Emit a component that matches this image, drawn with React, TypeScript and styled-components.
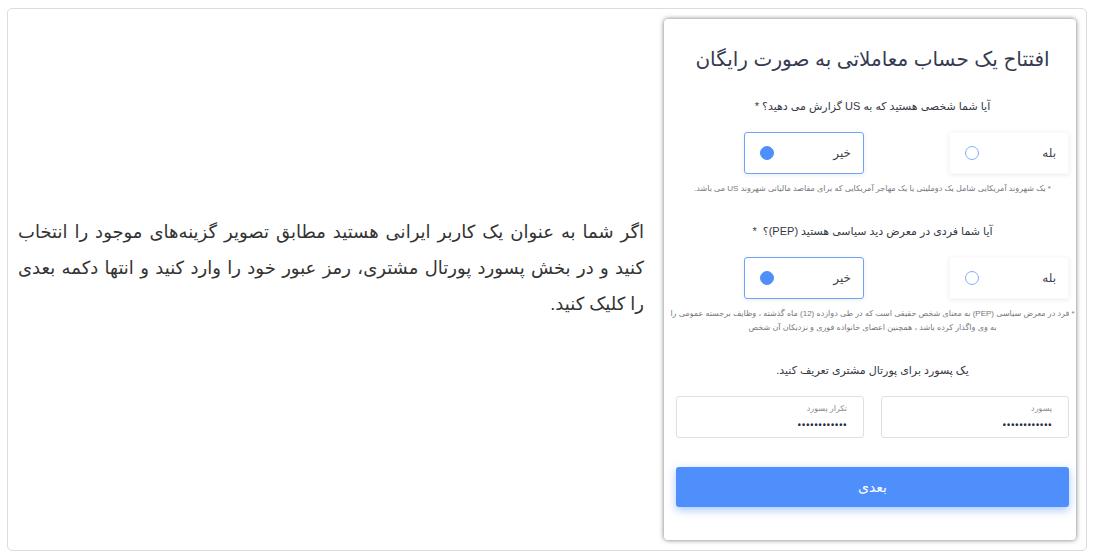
import React, { useState } from "react";
import styled, { createGlobalStyle } from "styled-components";

const GlobalStyle = createGlobalStyle`
  *, *::before, *::after { box-sizing: border-box; }
  body {
    margin: 0;
    background: #fff;
    font-family: "Liberation Sans", "DejaVu Sans", sans-serif;
  }
`;

const Panel = styled.main`
  display: flex;
  align-items: center;
  gap: 20px;
  margin: 8px 13px 5px 7px;
  padding: 10px;
  border: 1px solid #dcdcdc;
  border-radius: 5px;
`;

const FormCard = styled.form`
  flex: 0 0 412px;
  padding: 24px 7px 33px 12px;
  border-radius: 4px;
  background: #fff;
  box-shadow: 0 0 5px rgba(0, 0, 0, 0.55);
  color: #363b52;
`;

const Title = styled.h1`
  margin: 0 0 21px;
  font-size: 20px;
  line-height: 32px;
  font-weight: 400;
  text-align: center;
  white-space: nowrap;
`;

const Question = styled.h2`
  margin: 0 0 16px;
  font-size: 11px;
  line-height: 20px;
  font-weight: 400;
  text-align: center;
  color: #343844;
  white-space: nowrap;
`;

const Columns = styled.div`
  display: grid;
  grid-template-columns: 1fr 1fr;
  gap: 17px;
`;

const Option = styled.label<{ $selected: boolean }>`
  display: flex;
  align-items: center;
  justify-content: space-between;
  width: 120px;
  height: 42px;
  padding: 0 12px 0 15px;
  border: 1px solid ${(p) => (p.$selected ? "#6ea3f8" : "#fafafa")};
  border-radius: 3px;
  box-shadow: 0 1px 4px rgba(40, 60, 100, 0.1);
  font-size: 12px;
  line-height: 20px;
  color: #42454f;
`;

const Radio = styled.input`
  appearance: none;
  width: 14px;
  height: 14px;
  margin: 0;
  border: 1px solid #7fb0fa;
  border-radius: 50%;
  background: #fff;
  &:checked {
    border-color: #4f8ffb;
    background: #4f8ffb;
  }
`;

const Note = styled.p`
  margin: 8px -7px 25px;
  font-size: 8px;
  line-height: 14px;
  text-align: center;
  color: #75787d;
`;

const Field = styled.div`
  display: flex;
  flex-direction: column;
  height: 42px;
  padding: 5px 16px;
  border: 1px solid #e0e0e0;
  border-radius: 3px;
`;

const FieldLabel = styled.label`
  font-size: 8px;
  line-height: 14px;
  color: #85888e;
`;

const PasswordInput = styled.input`
  width: 100%;
  height: 18px;
  padding: 0;
  border: 0;
  outline: 0;
  background: transparent;
  font-family: "Noto Sans", sans-serif;
  font-size: 11px;
  color: #262b42;
`;

const NextButton = styled.button`
  display: block;
  width: 100%;
  height: 40px;
  margin-top: 29px;
  padding: 0;
  border: 0;
  border-radius: 3px;
  background: #4f8ffb;
  box-shadow: 0 3px 8px rgba(79, 143, 251, 0.5);
  font-family: inherit;
  font-size: 14px;
  color: #fff;
`;

const Description = styled.p`
  flex: 1;
  min-width: 0;
  margin: 0;
  padding-bottom: 24px;
  font-size: 18px;
  line-height: 36px;
  text-align: justify;
  color: #333;
`;

function YesNo({ name, label }: { name: string; label: string }) {
  const [value, setValue] = useState("no");
  return (
    <Columns role="radiogroup" aria-label={label}>
      {[["yes", "بله"], ["no", "خیر"]].map(([key, text]) => (
        <Option key={key} $selected={value === key}>
          {text}
          <Radio type="radio" name={name} value={key} checked={value === key} onChange={() => setValue(key)} />
        </Option>
      ))}
    </Columns>
  );
}

export default function App() {
  return (
    <>
      <GlobalStyle />
      <Panel dir="rtl" lang="fa">
        <FormCard onSubmit={(e) => e.preventDefault()}>
          <Title>افتتاح یک حساب معاملاتی به صورت رایگان</Title>
          <Question>آیا شما شخصی هستید که به US گزارش می دهید؟ *</Question>
          <YesNo name="us" label="US" />
          <Note>* یک شهروند آمریکایی شامل یک دوملیتی یا یک مهاجر آمریکایی که برای مقاصد مالیاتی شهروند US می باشد.</Note>
          <Question>آیا شما فردی در معرض دید سیاسی هستید (PEP)؟&nbsp; *</Question>
          <YesNo name="pep" label="PEP" />
          <Note>
            * فرد در معرض سیاسی (PEP) به معنای شخص حقیقی است که در طی دوازده (12) ماه گذشته ، وظایف برجسته عمومی را
            <br />
            به وی واگذار کرده باشد ، همچنین اعضای خانواده فوری و نزدیکان آن شخص
          </Note>
          <Question>یک پسورد برای پورتال مشتری تعریف کنید.</Question>
          <Columns>
            <Field>
              <FieldLabel htmlFor="password">پسورد</FieldLabel>
              <PasswordInput id="password" type="password" defaultValue="abcdefghijkl" />
            </Field>
            <Field>
              <FieldLabel htmlFor="repeat">تکرار پسورد</FieldLabel>
              <PasswordInput id="repeat" type="password" defaultValue="abcdefghijkl" />
            </Field>
          </Columns>
          <NextButton type="submit">بعدی</NextButton>
        </FormCard>
        <Description>
          اگر شما به عنوان یک کاربر ایرانی هستید مطابق تصویر گزینه‌های موجود را انتخاب کنید و در بخش پسورد پورتال مشتری، رمز عبور خود را وارد کنید و انتها دکمه بعدی را&nbsp;کلیک کنید.
        </Description>
      </Panel>
    </>
  );
}
